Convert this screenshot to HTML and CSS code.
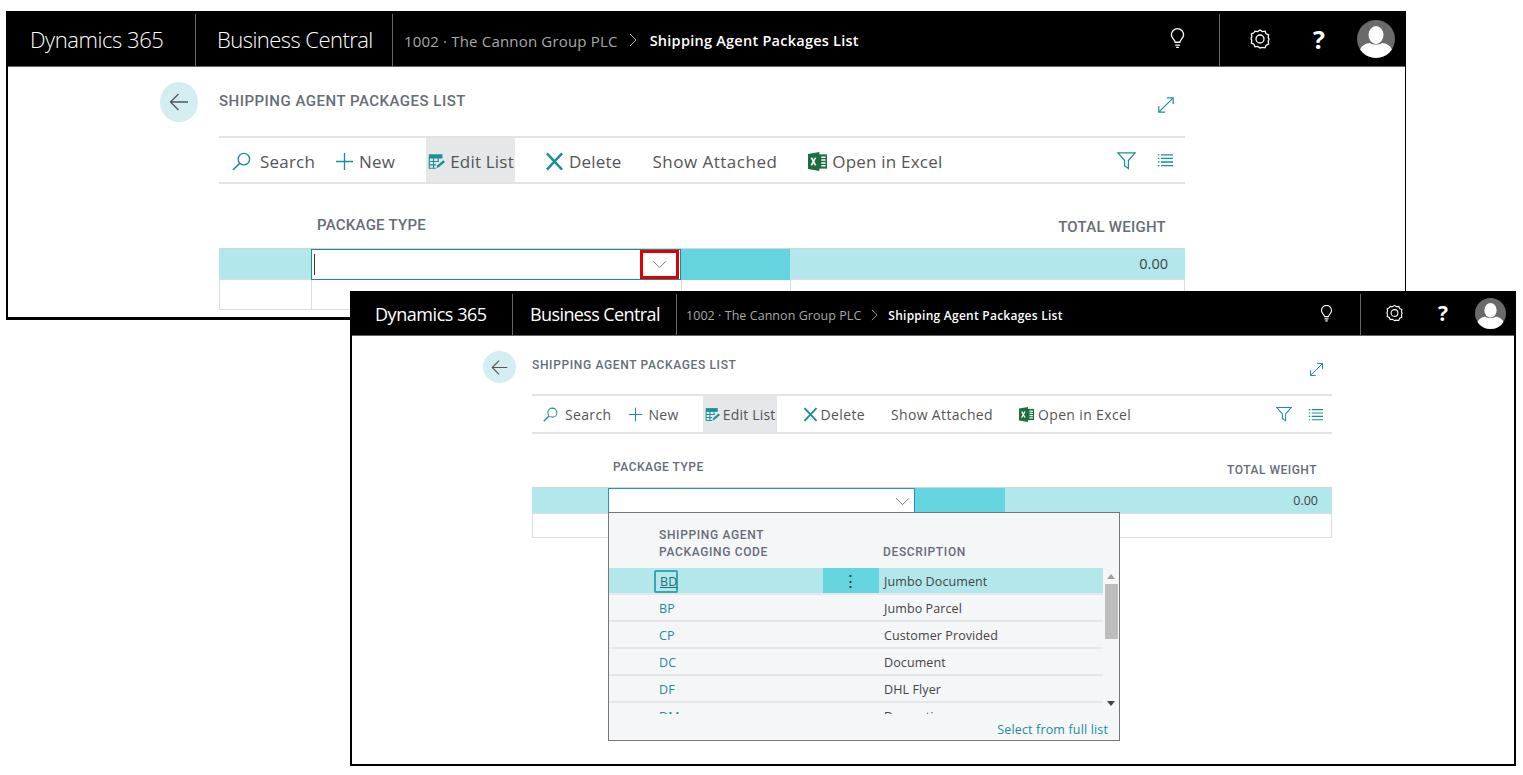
FILE: index.html
```html
<!DOCTYPE html>
<html lang="en">
<head>
  <meta charset="UTF-8">
  <meta name="viewport" content="width=device-width, initial-scale=1.0">
  <title>Shipping Agent Packages List</title>
  <link rel="stylesheet" href="styles.css">
</head>
<body>
  <svg class="icon-defs" width="0" height="0">
    <symbol id="i-back" viewBox="0 0 20 20"><path d="M19 10H1.5M9.5 2 1.5 10l8 8" fill="none" stroke="currentColor" stroke-width="1.3"/></symbol>
    <symbol id="i-expand" viewBox="0 0 20 20"><path d="M2 18 18 2M11 2h7v7M2 11v7h7" fill="none" stroke="currentColor" stroke-width="1.3"/></symbol>
    <symbol id="i-search" viewBox="0 0 20 20"><circle cx="12.5" cy="7.5" r="6" fill="none" stroke="currentColor" stroke-width="1.4"/><path d="M8 12 1 19" fill="none" stroke="currentColor" stroke-width="1.6"/></symbol>
    <symbol id="i-plus" viewBox="0 0 20 20"><path d="M10 1v18M1 10h18" fill="none" stroke="currentColor" stroke-width="1.4"/></symbol>
    <symbol id="i-edit" viewBox="0 0 20 20"><path d="M1 1.500h16v5H1z" fill="currentColor"/><path d="M1.500 6v12h8M6.500 6v12M12 6v4M1.500 10H13M1.500 14h8" fill="none" stroke="currentColor" stroke-width="1.300"/><path d="M10 18l1-3.500 7-6 2 2-7 6z" fill="currentColor"/></symbol>
    <symbol id="i-delete" viewBox="0 0 20 20"><path d="M2 1.500 18 18.500M18 1.500 2 18.500" fill="none" stroke="currentColor" stroke-width="2.600"/></symbol>
    <symbol id="i-excel" viewBox="0 0 20 20"><path d="M10 2.500h10v15H10z" fill="#1d6f42"/><path d="M14 5.500h4.500M14 8.500h4.500M14 11.500h4.500M14 14.500h4.500" stroke="#fff" stroke-width="1.500"/><path d="M0 2 12 0v20L0 18z" fill="#1d6f42"/><path d="M3.500 6 8 14M8 6l-4.500 8" stroke="#fff" stroke-width="1.800" fill="none"/></symbol>
    <symbol id="i-filter" viewBox="0 0 20 20"><path d="M1 2h18l-7 8v8.500l-4-3V10z" fill="none" stroke="currentColor" stroke-width="1.300"/></symbol>
    <symbol id="i-list" viewBox="0 0 20 20"><path d="M1 3.500h2M5 3.500h15M1 8h2M5 8h15M1 12.500h2M5 12.500h15M1 17h2M5 17h15" fill="none" stroke="currentColor" stroke-width="1.600"/></symbol>
    <symbol id="i-bulb" viewBox="0 0 16 22"><path d="M5.500 15C5 12 1.500 10.800 1.500 7a6.500 6.500 0 0 1 13 0c0 3.800-3.500 5-4 8z" fill="none" stroke="currentColor" stroke-width="1.400"/><path d="M5.500 18h5M6.500 20.500h3" fill="none" stroke="currentColor" stroke-width="1.400"/></symbol>
    <symbol id="i-gear" viewBox="0 0 20 20"><path d="M10 1l2.300 1.600 2.700-.4 1.100 2.600 2.500 1.200-.4 2.800L19 10l-.8 2.200.4 2.800-2.500 1.200-1.100 2.600-2.700-.4L10 19l-2.300-1.600-2.700.4-1.100-2.600-2.500-1.200.4-2.800L1 10l.8-2.200-.4-2.800 2.500-1.200L5 2.200l2.700.4z" fill="none" stroke="currentColor" stroke-width="1.300"/><circle cx="10" cy="10" r="4" fill="none" stroke="currentColor" stroke-width="1.300"/></symbol>
    <symbol id="i-avatar" viewBox="0 0 38 38"><defs><clipPath id="avatar-clip"><circle cx="19" cy="19" r="19"/></clipPath></defs><circle cx="19" cy="19" r="19" fill="#6a6a6a"/><g clip-path="url(#avatar-clip)" fill="#fff"><ellipse cx="19" cy="15" rx="7.500" ry="9"/><path d="M3 38v-7c0-5 6-8 10-8 2 2 10 2 12 0 4 0 10 3 10 8v7z"/></g></symbol>
    <symbol id="i-chevron" viewBox="0 0 16 10"><path d="M1 1.500 8 8.500l7-7" fill="none" stroke="currentColor" stroke-width="1.100"/></symbol>
    <symbol id="i-right" viewBox="0 0 8 14"><path d="M1 1l6 6-6 6" fill="none" stroke="currentColor" stroke-width="1"/></symbol>
  </svg>

  <section class="win win-a">
    <header class="topbar">
      <span class="brand">Dynamics 365</span>
      <span class="app">Business Central</span>
      <span class="crumb">1002 · The Cannon Group PLC</span>
      <svg class="crumb-sep"><use href="#i-right"/></svg>
      <span class="crumb-cur">Shipping Agent Packages List</span>
      <svg class="top-bulb"><use href="#i-bulb"/></svg>
      <span class="top-div"></span>
      <svg class="top-gear"><use href="#i-gear"/></svg>
      <span class="top-help">?</span>
      <svg class="top-avatar"><use href="#i-avatar"/></svg>
    </header>
    <div class="page">
      <div class="back"><svg><use href="#i-back"/></svg></div>
      <div class="main">
        <div class="title-row">
          <h2>SHIPPING AGENT PACKAGES LIST</h2>
          <svg class="expand"><use href="#i-expand"/></svg>
        </div>
        <div class="toolbar">
          <span class="tool tool-search"><svg><use href="#i-search"/></svg>Search</span>
          <span class="tool tool-new"><svg><use href="#i-plus"/></svg>New</span>
          <span class="tool tool-edit"><svg><use href="#i-edit"/></svg>Edit List</span>
          <span class="tool tool-delete"><svg><use href="#i-delete"/></svg>Delete</span>
          <span class="tool tool-show">Show Attached</span>
          <span class="tool tool-excel"><svg><use href="#i-excel"/></svg>Open in Excel</span>
          <svg class="tool-filter"><use href="#i-filter"/></svg>
          <svg class="tool-list"><use href="#i-list"/></svg>
        </div>
        <div class="col-heads">
          <span class="head-type">PACKAGE TYPE</span>
          <span class="head-weight">TOTAL WEIGHT</span>
        </div>
        <div class="row row-on">
          <div class="c-a"></div>
          <div class="c-b"><span class="caret"></span><span class="drop-btn"><svg><use href="#i-chevron"/></svg></span></div>
          <div class="c-c"></div>
          <div class="c-d">0.00</div>
        </div>
        <div class="row row-off"><div class="c-a"></div><div class="c-b"></div><div class="c-c"></div><div class="c-d"></div></div>
      </div>
    </div>
  </section>

  <section class="win win-b">
    <header class="topbar">
      <span class="brand">Dynamics 365</span>
      <span class="app">Business Central</span>
      <span class="crumb">1002 · The Cannon Group PLC</span>
      <svg class="crumb-sep"><use href="#i-right"/></svg>
      <span class="crumb-cur">Shipping Agent Packages List</span>
      <svg class="top-bulb"><use href="#i-bulb"/></svg>
      <span class="top-div"></span>
      <svg class="top-gear"><use href="#i-gear"/></svg>
      <span class="top-help">?</span>
      <svg class="top-avatar"><use href="#i-avatar"/></svg>
    </header>
    <div class="page">
      <div class="back"><svg><use href="#i-back"/></svg></div>
      <div class="main">
        <div class="title-row">
          <h2>SHIPPING AGENT PACKAGES LIST</h2>
          <svg class="expand"><use href="#i-expand"/></svg>
        </div>
        <div class="toolbar">
          <span class="tool tool-search"><svg><use href="#i-search"/></svg>Search</span>
          <span class="tool tool-new"><svg><use href="#i-plus"/></svg>New</span>
          <span class="tool tool-edit"><svg><use href="#i-edit"/></svg>Edit List</span>
          <span class="tool tool-delete"><svg><use href="#i-delete"/></svg>Delete</span>
          <span class="tool tool-show">Show Attached</span>
          <span class="tool tool-excel"><svg><use href="#i-excel"/></svg>Open in Excel</span>
          <svg class="tool-filter"><use href="#i-filter"/></svg>
          <svg class="tool-list"><use href="#i-list"/></svg>
        </div>
        <div class="col-heads">
          <span class="head-type">PACKAGE TYPE</span>
          <span class="head-weight">TOTAL WEIGHT</span>
        </div>
        <div class="row row-on">
          <div class="c-a"></div>
          <div class="c-b"><span class="drop-btn"><svg><use href="#i-chevron"/></svg></span></div>
          <div class="c-c"></div>
          <div class="c-d">0.00</div>
        </div>
        <div class="row row-off"><div class="c-a"></div><div class="c-b"></div><div class="c-c"></div><div class="c-d"></div></div>
      </div>
    </div>

    <div class="dropdown">
      <div class="dd-heads">
        <span class="dd-code-head">SHIPPING AGENT<br>PACKAGING CODE</span>
        <span class="dd-desc-head">DESCRIPTION</span>
      </div>
      <div class="dd-body">
        <div class="dd-rows">
          <div class="dd-row dd-row-on"><span class="dd-code"><a class="dd-focus">BD</a></span><span class="dd-menu">⋮</span><span class="dd-desc">Jumbo Document</span></div>
          <div class="dd-row"><span class="dd-code">BP</span><span class="dd-menu"></span><span class="dd-desc">Jumbo Parcel</span></div>
          <div class="dd-row"><span class="dd-code">CP</span><span class="dd-menu"></span><span class="dd-desc">Customer Provided</span></div>
          <div class="dd-row"><span class="dd-code">DC</span><span class="dd-menu"></span><span class="dd-desc">Document</span></div>
          <div class="dd-row"><span class="dd-code">DF</span><span class="dd-menu"></span><span class="dd-desc">DHL Flyer</span></div>
          <div class="dd-row"><span class="dd-code">DM</span><span class="dd-menu"></span><span class="dd-desc">Domestic</span></div>
        </div>
        <div class="scrollbar">
          <span class="arrow-up"></span>
          <span class="thumb"></span>
          <span class="arrow-down"></span>
        </div>
      </div>
      <div class="dd-foot">Select from full list</div>
    </div>
  </section>
</body>
</html>
```

FILE: styles.css
```css
* {
  box-sizing: border-box;
}
html, body {
  margin: 0;
  height: 100%;
  overflow: hidden;
}
body {
  position: relative;
  width: 1523px;
  height: 775px;
  background: white;
  font-family: "Open Sans", "Noto Sans", sans-serif;
  color: #505050;
}
.icon-defs {
  position: absolute;
}
svg {
  display: block;
  flex: none;
}

/* the two windows sit on a free canvas */
.win {
  position: absolute;
  background: white;
  border: solid black;
  display: flex;
  flex-direction: column;
}
.win-a {
  left: 6px;
  top: 11px;
  width: 1400px;
  height: 309px;
  border-width: 0 1px 3px 2px;
}
.win-b {
  left: 350px;
  top: 291px;
  width: 1166px;
  height: 475px;
  border-width: 0 2px 2px 2px;
}

/* top bar */
.topbar {
  display: flex;
  align-items: center;
  flex: none;
  background: black;
  color: white;
  border-bottom: 1px solid #666;
}
.win-a .topbar {
  height: 56px;
}
.win-b .topbar {
  height: 45px;
}
.topbar span {
  white-space: nowrap;
}
.brand, .app {
  display: flex;
  align-items: center;
  align-self: stretch;
  border-right: 1px solid #666;
  margin-top: 3px;
  padding-bottom: 2px;
}
.win-a .brand {
  width: 188px;
  padding-left: 22px;
  font-size: 22px;
  font-weight: 300;
  letter-spacing: -0.45px;
}
.win-a .app {
  width: 197px;
  padding-left: 21px;
  font-size: 22px;
  font-weight: 300;
  letter-spacing: -0.55px;
}
.win-b .brand {
  width: 161px;
  padding-left: 23px;
  font-size: 18px;
  letter-spacing: -0.45px;
}
.win-b .app {
  width: 164px;
  padding-left: 17px;
  font-size: 18px;
  letter-spacing: -0.6px;
}
.crumb, .crumb-cur {
  margin-top: 4px;
}
.crumb, .crumb-sep {
  color: #a8a8a8;
}
.win-a .crumb {
  margin-left: 11px;
  font-size: 15px;
  letter-spacing: 0.18px;
}
.win-b .crumb {
  margin-left: 9px;
  font-size: 12.5px;
  letter-spacing: 0.05px;
}
.win-a .crumb-sep {
  width: 8px;
  height: 14px;
  margin: 3px 13px 0 11px;
}
.win-b .crumb-sep {
  width: 7px;
  height: 12px;
  margin: 3px 10px 0 10px;
}
.crumb-cur {
  font-weight: 600;
}
.win-a .crumb-cur {
  font-size: 14.5px;
  letter-spacing: 0.25px;
}
.win-b .crumb-cur {
  font-size: 12px;
  letter-spacing: 0.25px;
}
.top-bulb, .top-gear, .top-avatar {
  color: white;
}
.top-bulb {
  margin-left: auto;
}
.top-div {
  align-self: stretch;
  width: 1px;
  margin-top: 3px;
  background: #666;
}
.top-help {
  font-weight: 700;
  text-align: center;
}
.win-a .top-bulb {
  width: 15px;
  height: 21px;
  margin-right: 34px;
}
.win-a .top-gear {
  width: 20px;
  height: 22px;
  margin-left: 30px;
}
.win-a .top-help {
  margin-left: 40px;
  font-size: 25px;
  width: 18px;
}
.win-a .top-avatar {
  width: 38px;
  height: 38px;
  margin: 0 10px 0 29px;
}
.win-b .top-bulb {
  width: 13px;
  height: 17px;
  margin-right: 27px;
}
.win-b .top-gear {
  width: 17px;
  height: 18px;
  margin-left: 25px;
}
.win-b .top-help {
  margin-left: 33px;
  font-size: 21px;
  width: 14px;
}
.win-b .top-avatar {
  width: 31px;
  height: 31px;
  margin: 0 8px 0 25px;
}

/* page body */
.page {
  display: flex;
  flex: 1;
  align-items: flex-start;
  overflow: hidden;
}
.win-a .page {
  padding: 15px 0 0 152px;
}
.win-b .page {
  padding: 15px 0 0 131px;
}
.back {
  display: flex;
  align-items: center;
  justify-content: center;
  border-radius: 50%;
  background: #d3edf0;
  color: #555;
  flex: none;
}
.win-a .back {
  width: 38px;
  height: 40px;
  margin-right: 21px;
}
.win-a .back svg {
  width: 20px;
  height: 20px;
}
.win-b .back {
  width: 33px;
  height: 32px;
  margin-right: 16px;
}
.win-b .back svg {
  width: 17px;
  height: 17px;
}
.main {
  flex: none;
}
.win-a .main {
  width: 966px;
}
.win-b .main {
  width: 800px;
}
.title-row {
  display: flex;
  align-items: center;
  justify-content: space-between;
  border-bottom: 2px solid #e3e3e3;
}
.title-row h2 {
  margin: 0;
  font-family: Roboto, sans-serif;
  font-weight: 500;
  color: #666d78;
}
.win-a .title-row {
  height: 56px;
  padding-bottom: 16px;
}
.win-a .title-row h2 {
  font-size: 15px;
  letter-spacing: 0.5px;
}
.win-b .title-row {
  height: 45px;
  padding-bottom: 15px;
}
.win-b .title-row h2 {
  font-size: 12px;
  letter-spacing: 0.65px;
}
.expand {
  color: #1f8f9a;
}
.win-a .expand {
  width: 18px;
  height: 18px;
  margin: 8px 10px 0 0;
}
.win-b .expand {
  width: 15px;
  height: 15px;
  margin: 8px 8px 0 0;
}

/* command bar */
.toolbar {
  display: flex;
  align-items: center;
  border-bottom: 2px solid #e3e3e3;
  white-space: nowrap;
  color: #555;
}
.tool {
  display: flex;
  align-items: center;
  align-self: stretch;
}
.tool svg {
  color: #1a8f97;
}
.win-a .toolbar {
  height: 46px;
  font-size: 17px;
  letter-spacing: 0.2px;
  padding: 0 12px 0 13px;
}
.win-a .tool {
  padding-top: 2px;
}
.win-a .tool svg {
  width: 19px;
  height: 19px;
  margin-right: 5px;
}
.win-a .tool-search svg {
  margin-right: 9px;
}
.win-a .tool-new {
  margin-left: 20px;
}
.win-a .tool-edit {
  margin-left: 31px;
  padding-right: 1px;
  padding-left: 2px;
  background: #e6e7e8;
}
.win-a .tool-edit svg {
  width: 17px;
  height: 17px;
}
.win-a .tool-delete {
  margin-left: 30px;
}
.win-a .tool-show {
  margin-left: 31px;
  letter-spacing: 0.5px;
}
.win-a .tool-excel {
  margin-left: 31px;
}
.win-b .toolbar {
  height: 38px;
  font-size: 14px;
  letter-spacing: 0.35px;
  padding: 0 9px 0 11px;
}
.win-b .tool {
  padding-top: 1px;
}
.win-b .tool svg {
  width: 15px;
  height: 15px;
  margin-right: 4px;
}
.win-b .tool-search svg {
  margin-right: 7px;
}
.win-b .tool-new {
  margin-left: 17px;
}
.win-b .tool-new svg {
  margin-right: 5px;
}
.win-b .tool-edit {
  margin-left: 24px;
  padding-right: 1px;
  padding-left: 2px;
  letter-spacing: 0.2px;
  background: #e6e7e8;
}
.win-b .tool-edit svg {
  margin-right: 3px;
}
.win-b .tool-delete {
  margin-left: 26px;
}
.win-b .tool-delete svg {
  margin-right: 3px;
}
.win-b .tool-show {
  margin-left: 26px;
}
.win-b .tool-excel {
  margin-left: 26px;
}
.tool-filter {
  margin-left: auto;
  color: #1a8f97;
}
.tool-list {
  color: #1a8f97;
}
.win-a .tool-filter {
  width: 19px;
  height: 19px;
  margin-right: 21px;
}
.win-a .tool-list {
  width: 16px;
  height: 16px;
}
.win-b .tool-filter {
  width: 16px;
  height: 16px;
  margin-right: 16px;
}
.win-b .tool-list {
  width: 15px;
  height: 15px;
}

/* list */
.col-heads {
  display: flex;
  justify-content: space-between;
  font-family: Roboto, sans-serif;
  font-weight: 500;
  color: #666d78;
}
.win-a .col-heads {
  height: 64px;
  padding: 32px 19px 0 98px;
  font-size: 15px;
  letter-spacing: 0.25px;
}
.win-b .col-heads {
  height: 53px;
  padding: 26px 15px 0 81px;
  font-size: 12px;
  letter-spacing: 0.5px;
}
.head-weight {
  margin-top: 2px;
}
.win-b .head-weight {
  margin-top: 3px;
}
.row {
  display: grid;
}
.win-a .row {
  grid-template-columns: 92px 370px 109px 1fr;
  height: 31px;
}
.win-b .row {
  grid-template-columns: 76px 307px 90px 1fr;
  height: 26px;
}
.row-on {
  background: #b2e8ec;
  border-top: 1px solid #d5d5d5;
}
.row-on .c-c {
  background: #64d4de;
}
.row-on .c-b {
  display: flex;
  align-items: center;
  background: white;
}
.win-a .row-on .c-b {
  border: 1px solid #1c8b93;
}
.win-b .row-on .c-b {
  border: 1px solid #2f8bd0;
}
.caret {
  width: 1px;
  height: 21px;
  margin-left: 2px;
  background: #333;
}
.drop-btn {
  display: flex;
  align-items: center;
  justify-content: center;
  margin-left: auto;
  color: #777;
}
.win-a .drop-btn {
  width: 39px;
  height: 29px;
  border: 3px solid #e00000;
  margin-right: 1px;
}
.win-a .drop-btn svg {
  width: 15px;
  height: 9px;
}
.win-b .drop-btn {
  width: 24px;
  height: 24px;
}
.win-b .drop-btn svg {
  width: 15px;
  height: 9px;
}
.c-d {
  text-align: right;
  color: #444;
}
.win-a .c-d {
  padding-right: 17px;
  font-size: 14.5px;
  line-height: 30px;
}
.win-b .c-d {
  padding-right: 14px;
  font-size: 12.5px;
  line-height: 26px;
}
.row-off {
  border: solid #dcdcdc;
  border-width: 1px;
}
.row-off .c-a, .row-off .c-b, .row-off .c-c {
  border-right: 1px solid #dcdcdc;
}
.win-b .row-off {
  height: 25px;
}
.win-b .row-off .c-b, .win-b .row-off .c-c, .win-b .row-off .c-a {
  border-right: 0;
}

/* lookup dropdown, lies over the list */
.dropdown {
  position: absolute;
  left: 256px;
  top: 221px;
  width: 512px;
  height: 229px;
  display: flex;
  flex-direction: column;
  background: #f5f6f8;
  border: 1px solid #777;
  font-size: 12.5px;
}
.dd-heads {
  display: flex;
  align-items: flex-end;
  height: 55px;
  padding-bottom: 7px;
  flex: none;
  font-family: Roboto, sans-serif;
  font-weight: 500;
  font-size: 12px;
  line-height: 17px;
  letter-spacing: 0.65px;
  color: #666d78;
}
.dd-code-head {
  width: 274px;
  padding-left: 50px;
}
.dd-body {
  display: flex;
  height: 146px;
  flex: none;
  overflow: hidden;
}
.dd-rows {
  width: 494px;
  flex: none;
}
.dd-row {
  display: flex;
  align-items: center;
  height: 27px;
  padding-top: 2px;
  border-bottom: 2px solid #e6e7e9;
  color: #444;
  letter-spacing: 0.1px;
}
.dd-row-on {
  background: #b2e8ec;
}
.dd-code {
  width: 214px;
  padding-left: 50px;
  color: #1a8f97;
  flex: none;
}
.dd-focus {
  display: inline-block;
  margin-left: -5px;
  padding: 0 0 0 4px;
  width: 24px;
  border: 2px solid #3ba5ad;
  border-radius: 2px;
  line-height: 19px;
  text-decoration: underline;
  color: #1c6f78;
}
.dd-menu {
  display: flex;
  align-items: center;
  justify-content: center;
  align-self: stretch;
  width: 56px;
  margin-top: -2px;
  flex: none;
  font-size: 17px;
  color: #333;
}
.dd-row-on .dd-menu {
  background: #64d4de;
}
.dd-desc {
  padding-left: 5px;
}
.scrollbar {
  position: relative;
  flex: 1;
}
.thumb {
  position: absolute;
  left: 2px;
  right: 1px;
  top: 16px;
  height: 55px;
  background: #bdbdbd;
}
.arrow-up, .arrow-down {
  position: absolute;
  left: 4px;
  border: 4px solid transparent;
  border-top: 0;
  border-bottom: 5px solid #a0a0a0;
}
.arrow-up {
  top: 6px;
}
.arrow-down {
  bottom: 8px;
  border-bottom: 0;
  border-top: 5px solid #444;
}
.dd-foot {
  flex: 1;
  text-align: right;
  padding: 7px 11px 0 0;
  letter-spacing: 0.15px;
  color: #1a8f97;
}
```
